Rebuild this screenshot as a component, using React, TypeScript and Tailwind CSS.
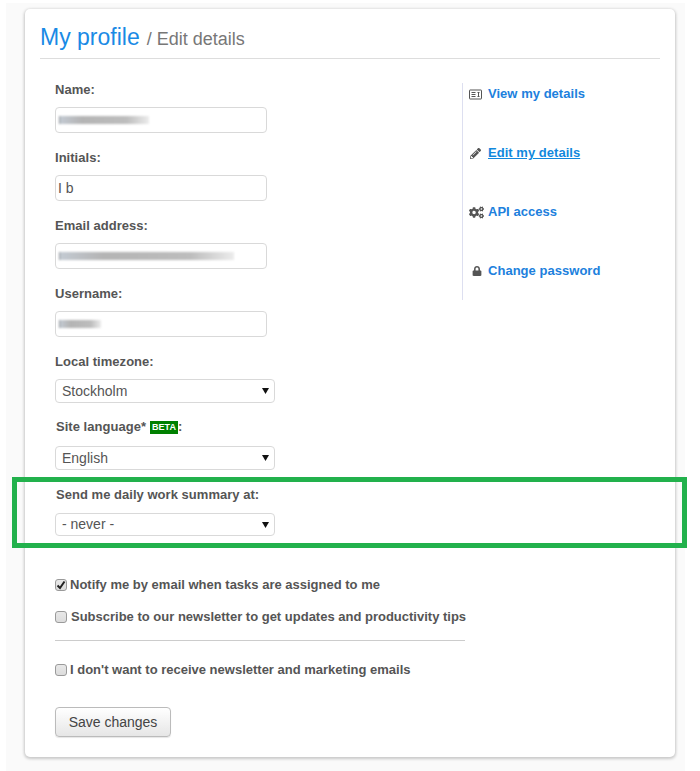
import React from "react";
import { FaPencilAlt, FaCogs, FaLock } from "react-icons/fa";

const font = "font-['Liberation_Sans',Arial,sans-serif]";

function Label({ children, className = "" }: { children: React.ReactNode; className?: string }) {
  return <div className={`h-[16px] text-[13px] leading-[18px] font-bold text-[#555] tracking-[0.03px] ${className}`}>{children}</div>;
}

function Smudge({ width }: { width: number }) {
  return (
    <div
      className="h-[8px] border-l border-[#8f949a] bg-[linear-gradient(90deg,#c3cad2,#b4b4b4_25%,#bdbdbd_75%,#ececec)] blur-[0.8px]"
      style={{ width }}
    />
  );
}

function TextBox({ smudge, value }: { smudge?: number; value?: string }) {
  return (
    <div className="mt-[10px] mb-[16px] flex h-[26px] w-[212px] items-center rounded-[4px] border border-[#d9d9d9] bg-white px-[3px] text-[14px] text-[#555]">
      {smudge ? <Smudge width={smudge} /> : <span className="-ml-px">{value}</span>}
    </div>
  );
}

function Select({ value, short = false }: { value: string; short?: boolean }) {
  return (
    <div className={`relative w-[220px] ${short ? "h-[23px]" : "h-[24px]"}`}>
      <select
        defaultValue={value}
        className="block h-full w-full appearance-none rounded-[4px] border border-[#d9d9d9] bg-white pl-[6px] text-[14px] text-[#555] outline-none"
      >
        <option>{value}</option>
      </select>
      <svg className="pointer-events-none absolute right-[6px] top-[9px]" width="7" height="6" viewBox="0 0 7 6">
        <path d="M0 0h7L3.5 6z" fill="#111" />
      </svg>
    </div>
  );
}

function Check({ checked = false, label, gap }: { checked?: boolean; label: string; gap: string }) {
  return (
    <label className={`flex h-[16px] items-center whitespace-nowrap ${gap} text-[13px] font-bold text-[#555]`}>
      <span className="relative flex h-[12px] w-[12px] shrink-0 items-center justify-center rounded-[3px] border border-[#9a9a9a] bg-[linear-gradient(#e8e8e8,#dcdcdc)]">
        <input type="checkbox" defaultChecked={checked} className="absolute h-full w-full appearance-none" />
        {checked && (
          <svg width="10" height="10" viewBox="0 0 10 10" className="pointer-events-none">
            <path d="M1.5 5.5 4 8l4.5-6.5" fill="none" stroke="#222" strokeWidth="2" />
          </svg>
        )}
      </span>
      {label}
    </label>
  );
}

function SideLink({ icon, label, underline = false }: { icon: React.ReactNode; label: string; underline?: boolean }) {
  return (
    <div className="flex h-[18px] items-center">
      <span className="flex w-[19px] shrink-0 items-center text-[#555]">{icon}</span>
      <a href="#" className={`text-[13px] font-bold leading-[18px] tracking-[0.03px] ${underline ? "text-[#1188dd] underline" : "text-[#2080dd]"}`}>
        {label}
      </a>
    </div>
  );
}

function DetailsIcon() {
  return (
    <svg width="13" height="11" viewBox="0 0 13 11" fill="none">
      <rect x="0.5" y="1" width="12" height="9" rx="0.5" stroke="#555" />
      <path d="M2.5 3.5h4M2.5 5.5h4M2.5 7.5h4M8.5 3.5h2M9.5 3.5v4.5M8.5 7.5h2" stroke="#555" />
    </svg>
  );
}

export default function App() {
  return (
    <div className={`relative h-[771px] w-[700px] overflow-hidden bg-white ${font}`}>
      <div className="ml-[6px] mt-[3px] h-[768px] w-[679px] bg-[#fafafa] pl-[19px] pr-[10px] pt-[6px]">
        <div className="h-[748px] w-[650px] rounded-[5px] bg-white px-[15px] shadow-[0_1px_3px_1px_rgba(0,0,0,0.2)]">
          <div className="flex h-[50px] items-baseline border-b border-[#dddddd] pt-[11px]">
            <span className="text-[23px] leading-[34px] text-[#1a8ae5]">My profile</span>
            <span className="ml-[7px] text-[18px] text-[#777]">/ Edit details</span>
          </div>

          <div className="flex">
            <div className="ml-[15px] w-[407px] pt-[22px]">
              <Label>Name:</Label>
              <TextBox smudge={90} />
              <Label>Initials:</Label>
              <TextBox value="I b" />
              <Label>Email address:</Label>
              <TextBox smudge={175} />
              <Label>Username:</Label>
              <TextBox smudge={42} />
              <Label>Local timezone:</Label>
              <div className="mt-[10px] mb-[16px]"><Select value="Stockholm" /></div>
              <Label className="ml-[1px] flex items-center">
                Site language*
                <span className="ml-[4px] flex h-[13px] w-[28px] items-center justify-center bg-[#008000] text-[9px] font-bold leading-none text-white">BETA</span>
                :
              </Label>
              <div className="mt-[11px] mb-[16px]"><Select value="English" /></div>
              <Label className="ml-[1px]">Send me daily work summary at:</Label>
              <div className="mt-[11px]"><Select value="- never -" short /></div>

              <div className="mt-[41px] flex flex-col">
                <Check checked label="Notify me by email when tasks are assigned to me" gap="gap-[3px]" />
                <div className="mt-[16px]">
                  <Check label="Subscribe to our newsletter to get updates and productivity tips" gap="gap-[4px]" />
                </div>
                <div className="mt-[15px] h-px w-[410px] bg-[#cccccc]" />
                <div className="mt-[21px]">
                  <Check label="I don't want to receive newsletter and marketing emails" gap="gap-[3px]" />
                </div>
              </div>

              <button className="mt-[29px] h-[30px] w-[116px] rounded-[4px] border border-[#bbbbbb] bg-[linear-gradient(#ffffff,#e6e6e6)] text-[14px] text-[#444] shadow-[0_1px_1px_rgba(0,0,0,0.1)]">
                Save changes
              </button>
            </div>

            <div className="mt-[24px] flex h-[217px] w-[198px] flex-col gap-[41px] border-l border-[#dddff0] pl-[6px] pt-[2px]">
              <SideLink icon={<DetailsIcon />} label="View my details" />
              <SideLink icon={<FaPencilAlt size={11} className="ml-[1px]" />} label="Edit my details" underline />
              <SideLink icon={<FaCogs size={15} />} label="API access" />
              <SideLink icon={<FaLock size={10} className="ml-[3px]" />} label="Change password" />
            </div>
          </div>
        </div>
      </div>

      <div className="pointer-events-none absolute left-[12px] top-[477px] h-[71px] w-[675px] border-[5px] border-[#22b14c]" />
    </div>
  );
}
